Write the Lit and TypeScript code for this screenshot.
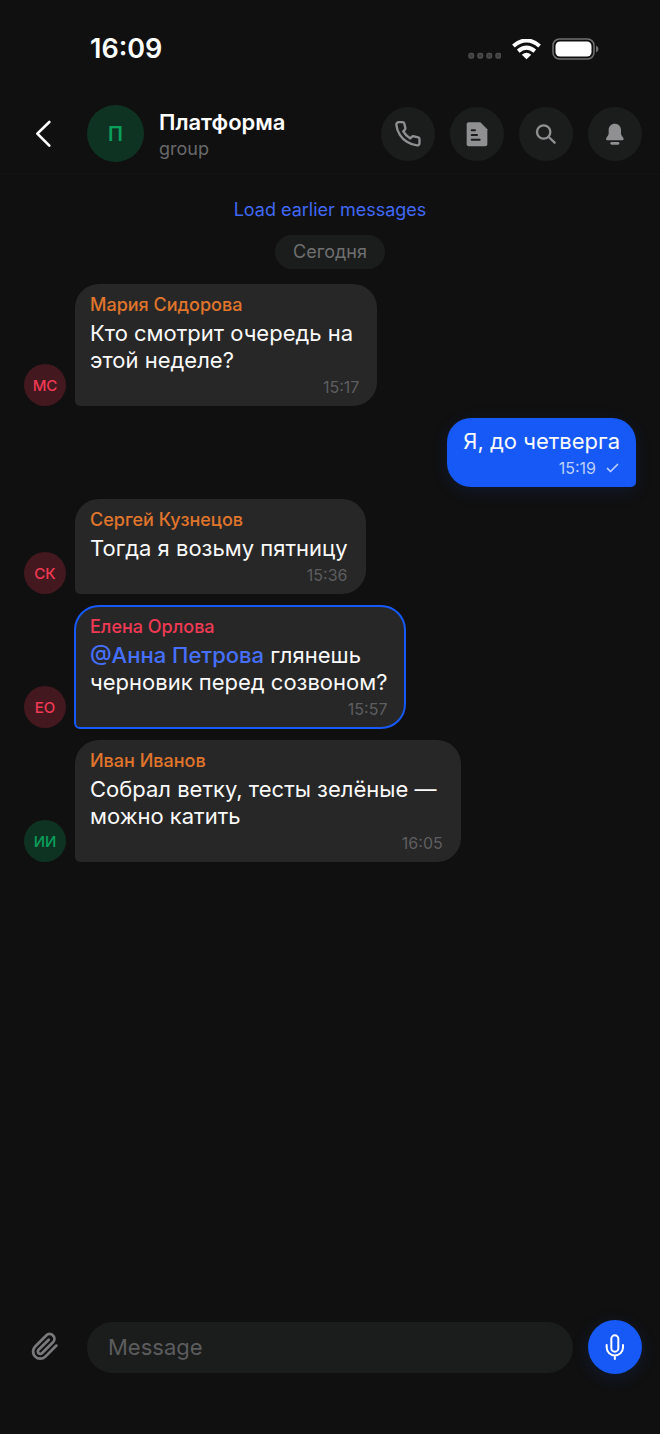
import { LitElement, html, css, svg, nothing } from "lit";
import { customElement, property } from "lit/decorators.js";
import { classMap } from "lit/directives/class-map.js";

type Tone = "red" | "green" | "orange";

interface Message {
  author?: string;
  initials?: string;
  nameTone?: Tone;
  avatarTone?: Tone;
  mention?: string;
  text: string;
  time: string;
  own?: boolean;
  highlighted?: boolean;
}

const messages: Message[] = [
  {
    author: "Мария Сидорова",
    initials: "МС",
    nameTone: "orange",
    avatarTone: "red",
    text: "Кто смотрит очередь на \nэтой неделе?",
    time: "15:17",
  },
  { text: "Я, до четверга", time: "15:19", own: true },
  {
    author: "Сергей Кузнецов",
    initials: "СК",
    nameTone: "orange",
    avatarTone: "red",
    text: "Тогда я возьму пятницу",
    time: "15:36",
  },
  {
    author: "Елена Орлова",
    initials: "ЕО",
    nameTone: "red",
    avatarTone: "red",
    mention: "@Анна Петрова",
    text: " глянешь\nчерновик перед созвоном?",
    time: "15:57",
    highlighted: true,
  },
  {
    author: "Иван Иванов",
    initials: "ИИ",
    nameTone: "orange",
    avatarTone: "green",
    text: "Собрал ветку, тесты зелёные — \nможно катить",
    time: "16:05",
  },
];

const phoneIcon = svg`
  <g transform="translate(38.5 38.5) scale(3.5)" fill="none" stroke="currentColor" stroke-width="2" stroke-linecap="round" stroke-linejoin="round">
    <path d="M22 16.92v3a2 2 0 0 1-2.18 2 19.79 19.79 0 0 1-8.63-3.07 19.5 19.5 0 0 1-6-6 19.79 19.79 0 0 1-3.07-8.67A2 2 0 0 1 4.11 2h3a2 2 0 0 1 2 1.72 12.84 12.84 0 0 0 .7 2.81 2 2 0 0 1-.45 2.11L8.09 9.91a16 16 0 0 0 6 6l1.27-1.27a2 2 0 0 1 2.11-.45 12.84 12.84 0 0 0 2.81.7A2 2 0 0 1 22 16.92z"/>
  </g>`;

const fileIcon = svg`
  <path fill="currentColor" d="M56 46H91L112 67V112a6 6 0 0 1-6 6H56a6 6 0 0 1-6-6V52a6 6 0 0 1 6-6z"/>
  <path class="cut" fill="none" stroke-width="6" stroke-linecap="round" d="M65 70H75M65 84H81M65 98H89"/>`;

const searchIcon = svg`
  <g fill="none" stroke="currentColor" stroke-width="7" stroke-linecap="round">
    <circle cx="74" cy="75" r="20"/>
    <path d="M89 90L107 107"/>
  </g>`;

const bellIcon = svg`
  <path fill="currentColor" d="M80.500 50C70 50 62 58 62 69V80C62 85 54 91 54 96C54 98.500 56 100 59 100H102C105 100 107 98.500 107 96C107 91 99 85 99 80V69C99 58 91 50 80.500 50z"/>
  <path fill="none" stroke="currentColor" stroke-width="8" stroke-linecap="round" d="M71 109H90"/>`;

const micIcon = svg`
  <g fill="none" stroke="currentColor" stroke-width="6" stroke-linecap="round">
    <rect x="70" y="46" width="21" height="49" rx="10.500"/>
    <path d="M56 75V82a24.500 24.500 0 0 0 49 0V75M80.500 107V117"/>
  </g>`;

const clipIcon = svg`
  <g transform="translate(38 37) scale(3.600)" fill="none" stroke="currentColor" stroke-width="2.3" stroke-linecap="round" stroke-linejoin="round">
    <path d="M21.440 11.050l-9.190 9.190a6 6 0 0 1-8.490-8.490l9.190-9.190a4 4 0 0 1 5.660 5.660l-9.200 9.190a2 2 0 0 1-2.830-2.830l8.490-8.480"/>
  </g>`;

const backIcon = svg`
  <path fill="none" stroke="currentColor" stroke-width="8" stroke-linecap="round" stroke-linejoin="round" d="M94 45L58 80L94 116"/>`;

const glyph = (content: unknown) =>
  html`<svg viewBox="0 0 162 162" width="54" height="54" aria-hidden="true">${content}</svg>`;

@customElement("status-bar")
class StatusBar extends LitElement {
  static styles = css`
    :host {
      display: flex;
      justify-content: space-between;
      align-items: center;
      padding: 33px 61px 0 90px;
      height: 32px;
      color: #fff;
    }
    .clock {
      font-size: 27px;
      line-height: 32px;
      font-weight: 600;
    }
    .signals {
      display: flex;
      align-items: center;
      gap: 11px;
    }
    .cells {
      align-self: flex-end;
    }
    svg {
      display: block;
    }
  `;

  render() {
    return html`
      <span class="clock">16:09</span>
      <div class="signals">
        <svg class="cells" width="33" height="8" viewBox="0 0 33 8" aria-hidden="true">
          <g fill="#3c3c3c" stroke="#4c4c4c" stroke-width="1.5">
            <rect x="1" y="1.500" width="4.500" height="4.500" rx="1.500" />
            <rect x="10" y="1.500" width="4.500" height="4.500" rx="1.500" />
            <rect x="19" y="1.500" width="4.500" height="4.500" rx="1.500" />
            <rect x="28" y="1.500" width="4.500" height="4.500" rx="1.500" />
          </g>
        </svg>
        <svg width="29" height="21" viewBox="0 0 29 21" aria-hidden="true">
          <g fill="none" stroke="#fff" stroke-width="4">
            <path d="M1.400 7Q14.500 -4.100 27.600 7" />
            <path d="M6.200 12.100Q14.500 5.100 22.800 12.100" />
          </g>
          <path fill="#fff" d="M14.500 20.300L9.800 15.700Q14.500 12 19.200 15.700z" />
        </svg>
        <svg width="47" height="22" viewBox="0 0 47 22" aria-hidden="true">
          <rect x="1" y="1" width="41" height="20" rx="6.500" fill="none" stroke="#707070" stroke-width="1.500" />
          <rect x="3.500" y="3.500" width="36" height="15" rx="4.500" fill="#fff" />
          <path d="M44 7.500Q46.500 8.500 46.500 11Q46.500 13.500 44 14.500z" fill="#707070" />
        </svg>
      </div>
    `;
  }
}

@customElement("chat-header")
class ChatHeader extends LitElement {
  static styles = css`
    :host {
      display: flex;
      align-items: center;
      gap: 15px;
      padding: 40px 18px 11px;
      border-bottom: 1px solid #131313;
    }
    .back,
    .action {
      flex: none;
      width: 54px;
      height: 54px;
      padding: 0;
      border: 0;
      border-radius: 50%;
      background: none;
      color: #fff;
    }
    .action {
      background: #1b1d1c;
      color: #909093;
    }
    .cut {
      stroke: #1b1d1c;
    }
    svg {
      display: block;
    }
    .avatar {
      flex: none;
      display: grid;
      place-items: center;
      width: 57px;
      height: 57px;
      border-radius: 50%;
      background: #0f3323;
      color: #0a9f5b;
      font-size: 20px;
      font-weight: 600;
    }
    .title {
      flex: 1;
      min-width: 0;
      display: flex;
      flex-direction: column;
    }
    h1 {
      margin: 0;
      font-size: 22px;
      line-height: 30px;
      font-weight: 600;
      color: #fff;
    }
    .kind {
      font-size: 18px;
      line-height: 24px;
      color: #69696b;
    }
  `;

  render() {
    return html`
      <button class="back" aria-label="Back">${glyph(backIcon)}</button>
      <div class="avatar">П</div>
      <div class="title">
        <h1>Платформа</h1>
        <span class="kind">group</span>
      </div>
      <button class="action" aria-label="Call">${glyph(phoneIcon)}</button>
      <button class="action" aria-label="Files">${glyph(fileIcon)}</button>
      <button class="action" aria-label="Search">${glyph(searchIcon)}</button>
      <button class="action" aria-label="Notifications">${glyph(bellIcon)}</button>
    `;
  }
}

@customElement("chat-message")
class ChatMessage extends LitElement {
  @property({ attribute: false }) message!: Message;

  static styles = css`
    :host {
      display: block;
    }
    .row {
      display: flex;
      align-items: flex-end;
      gap: 9px;
    }
    .row.own {
      justify-content: flex-end;
    }
    .avatar {
      flex: none;
      display: grid;
      place-items: center;
      width: 42px;
      height: 42px;
      border-radius: 50%;
      font-size: 15px;
      font-weight: 500;
    }
    .avatar.red {
      background: #43181f;
      color: #f03a55;
    }
    .avatar.green {
      background: #0f3323;
      color: #0a9f5b;
    }
    .bubble {
      display: flex;
      flex-direction: column;
      max-width: 75%;
      padding: 10px 18px 9px 15px;
      border-radius: 24px 24px 24px 5px;
      background: #272727;
      color: #fafafa;
    }
    .own .bubble {
      padding: 10px 16px 9px;
      border-radius: 24px 24px 5px 24px;
      background: #1759f6;
      box-shadow: 0 4px 18px rgba(23, 89, 246, 0.12);
    }
    .highlighted {
      outline: 2px solid #1759f6;
      outline-offset: -1px;
    }
    .name {
      margin-bottom: 4px;
      font-size: 18px;
      line-height: 22px;
      font-weight: 500;
    }
    .name.orange {
      color: #e0752c;
    }
    .name.red {
      color: #f03a55;
    }
    .text {
      margin: 0;
      font-size: 22px;
      line-height: 27px;
      white-space: pre-wrap;
    }
    .mention {
      color: #4670fb;
      font-weight: 500;
    }
    .meta {
      display: flex;
      justify-content: flex-end;
      align-items: center;
      gap: 9px;
      margin-top: 3px;
      font-size: 16px;
      line-height: 20px;
      color: #5e5e60;
    }
    .own .meta {
      color: #bccffc;
    }
  `;

  render() {
    const m = this.message;
    return html`
      <div class=${classMap({ row: true, own: !!m.own })}>
        ${m.initials ? html`<div class="avatar ${m.avatarTone}">${m.initials}</div>` : nothing}
        <div class=${classMap({ bubble: true, highlighted: !!m.highlighted })}>
          ${m.author ? html`<span class="name ${m.nameTone}">${m.author}</span>` : nothing}
          <p class="text">${m.mention ? html`<span class="mention">${m.mention}</span>` : nothing}${m.text}</p>
          <div class="meta">
            <time>${m.time}</time>
            ${m.own
              ? html`<svg width="15" height="12" viewBox="0 0 15 12" role="img" aria-label="Sent">
                  <path d="M2.500 6.500L5.500 9.500L12.500 2.500" fill="none" stroke="currentColor" stroke-width="1.700" stroke-linecap="round" stroke-linejoin="round" />
                </svg>`
              : nothing}
          </div>
        </div>
      </div>
    `;
  }
}

@customElement("chat-composer")
class ChatComposer extends LitElement {
  static styles = css`
    :host {
      display: flex;
      align-items: center;
      gap: 15px;
      padding: 0 18px 60px;
    }
    button {
      flex: none;
      width: 54px;
      height: 54px;
      padding: 0;
      border: 0;
      border-radius: 50%;
    }
    svg {
      display: block;
    }
    .attach {
      background: none;
      color: #79797b;
    }
    .voice {
      background: #1759f6;
      color: #fff;
      box-shadow: 0 4px 18px rgba(23, 89, 246, 0.14);
    }
    .field {
      flex: 1;
      min-width: 0;
      height: 51px;
      box-sizing: border-box;
      padding: 0 21px;
      border: 0;
      border-radius: 26px;
      outline: 0;
      background: #1b1d1c;
      color: #fafafa;
      font: inherit;
      font-size: 22px;
    }
    .field::placeholder {
      color: #5c5c5e;
      opacity: 1;
    }
  `;

  render() {
    return html`
      <button class="attach" aria-label="Attach file">${glyph(clipIcon)}</button>
      <input class="field" type="text" placeholder="Message" aria-label="Message" />
      <button class="voice" aria-label="Record voice message">${glyph(micIcon)}</button>
    `;
  }
}

@customElement("app-root")
class AppRoot extends LitElement {
  static styles = css`
    :host {
      display: flex;
      flex-direction: column;
      min-height: 100vh;
      background: #101010;
      font-family: Inter, "Noto Sans", sans-serif;
    }
    main {
      flex: 1;
      display: flex;
      flex-direction: column;
      align-items: center;
      padding: 24px 24px;
    }
    .earlier {
      padding: 0;
      border: 0;
      background: none;
      color: #4068f5;
      font: inherit;
      font-size: 18px;
      line-height: 24px;
    }
    .day {
      margin: 13px 0 15px;
      padding: 5px 18px;
      border-radius: 17px;
      background: #1b1d1c;
      color: #6f6f71;
      font-size: 18px;
      line-height: 24px;
    }
    .messages {
      align-self: stretch;
      display: flex;
      flex-direction: column;
      gap: 12px;
      margin: 0;
      padding: 0;
      list-style: none;
    }
  `;

  render() {
    return html`
      <status-bar></status-bar>
      <chat-header></chat-header>
      <main>
        <button class="earlier">Load earlier messages</button>
        <div class="day">Сегодня</div>
        <ul class="messages">
          ${messages.map((m) => html`<li><chat-message .message=${m}></chat-message></li>`)}
        </ul>
      </main>
      <chat-composer></chat-composer>
    `;
  }
}
